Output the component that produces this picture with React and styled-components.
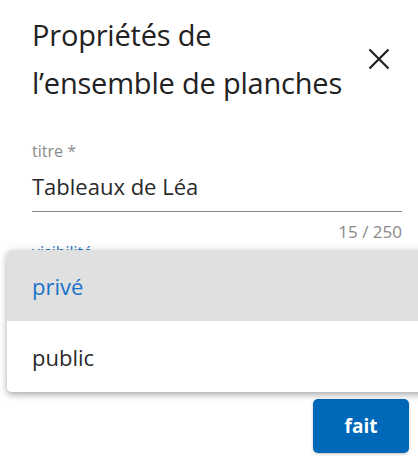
import React from 'react'
import styled, { createGlobalStyle } from 'styled-components'

const GlobalStyle = createGlobalStyle`
  html, body {
    margin: 0;
    padding: 0;
    background: #fff;
    overflow: hidden;
  }
  body {
    font-family: 'Open Sans', 'Noto Sans', sans-serif;
    color: #222;
  }
`

const Dialog = styled.div`
  position: relative;
  width: 418px;
  height: 456px;
  box-sizing: border-box;
  padding: 11px 16px 0 32px;
  display: flex;
  flex-direction: column;
`

const Header = styled.div`
  display: flex;
  align-items: center;
  justify-content: space-between;
`

const Title = styled.h2`
  margin: 0;
  font-size: 29px;
  font-weight: 400;
  line-height: 48px;
  color: #222;
  letter-spacing: -0.2px;
  white-space: nowrap;
`

const CloseButton = styled.button`
  border: none;
  background: none;
  padding: 0;
  margin-right: 6px;
  width: 34px;
  height: 34px;
  display: flex;
  align-items: center;
  justify-content: center;
  cursor: pointer;
`

const Field = styled.div`
  display: flex;
  flex-direction: column;
  margin-top: ${p => p.$top || 0}px;
`

const Label = styled.label`
  font-size: 16px;
  line-height: 20px;
  color: ${p => (p.$active ? '#1a73c8' : '#8a8a8a')};
`

const Input = styled.div`
  font-size: 22px;
  line-height: 30px;
  padding: 10px 0 10px;
  color: #2a2a2a;
  border-bottom: 1px solid ${p => (p.$strong ? '#8a8a8a' : '#c8c8c8')};
`

const Counter = styled.div`
  align-self: flex-end;
  font-size: 17px;
  line-height: 20px;
  margin-top: 10px;
  color: #8a8a8a;
`

const Footer = styled.div`
  display: flex;
  justify-content: flex-end;
  margin-top: auto;
  padding-bottom: 3px;
  margin-right: -7px;
`

const DoneButton = styled.button`
  width: 96px;
  height: 54px;
  border: none;
  border-radius: 5px;
  background: #0068b9;
  color: #fff;
  font-family: inherit;
  font-size: 19px;
  font-weight: 700;
  box-shadow: 0 1px 3px rgba(0, 0, 0, 0.25);
`

const Menu = styled.ul`
  position: absolute;
  left: 7px;
  right: -20px;
  top: 250px;
  margin: 0;
  padding: 0;
  list-style: none;
  background: #fff;
  border-radius: 5px;
  overflow: hidden;
  box-shadow: 0 3px 6px rgba(0, 0, 0, 0.28), 0 0 12px rgba(0, 0, 0, 0.08);
`

const MenuItem = styled.li`
  height: 71px;
  display: flex;
  align-items: center;
  padding-left: 25px;
  font-size: 22px;
  color: ${p => (p.$selected ? '#1a73c8' : '#2a2a2a')};
  background: ${p => (p.$selected ? '#e0e0e0' : '#fff')};
`

const CloseIcon = () => (
  <svg width="22" height="22" viewBox="0 0 22 22">
    <path d="M1.5 1.5 L20.5 20.5 M20.5 1.5 L1.5 20.5" stroke="#1f1f1f" strokeWidth="2.2" fill="none" />
  </svg>
)

export default function App() {
  return (
    <>
      <GlobalStyle />
      <Dialog>
        <Header>
          <Title>
            Propriétés de
            <br />
            l’ensemble de planches
          </Title>
          <CloseButton aria-label="fermer">
            <CloseIcon />
          </CloseButton>
        </Header>

        <Field $top={34}>
          <Label>titre *</Label>
          <Input $strong>Tableaux de Léa</Input>
          <Counter>15 / 250</Counter>
        </Field>

        <Field>
          <Label $active>visibilité</Label>
          <Input>privé</Input>
        </Field>

        <Footer>
          <DoneButton>fait</DoneButton>
        </Footer>

        <Menu>
          <MenuItem $selected>privé</MenuItem>
          <MenuItem>public</MenuItem>
        </Menu>
      </Dialog>
    </>
  )
}
